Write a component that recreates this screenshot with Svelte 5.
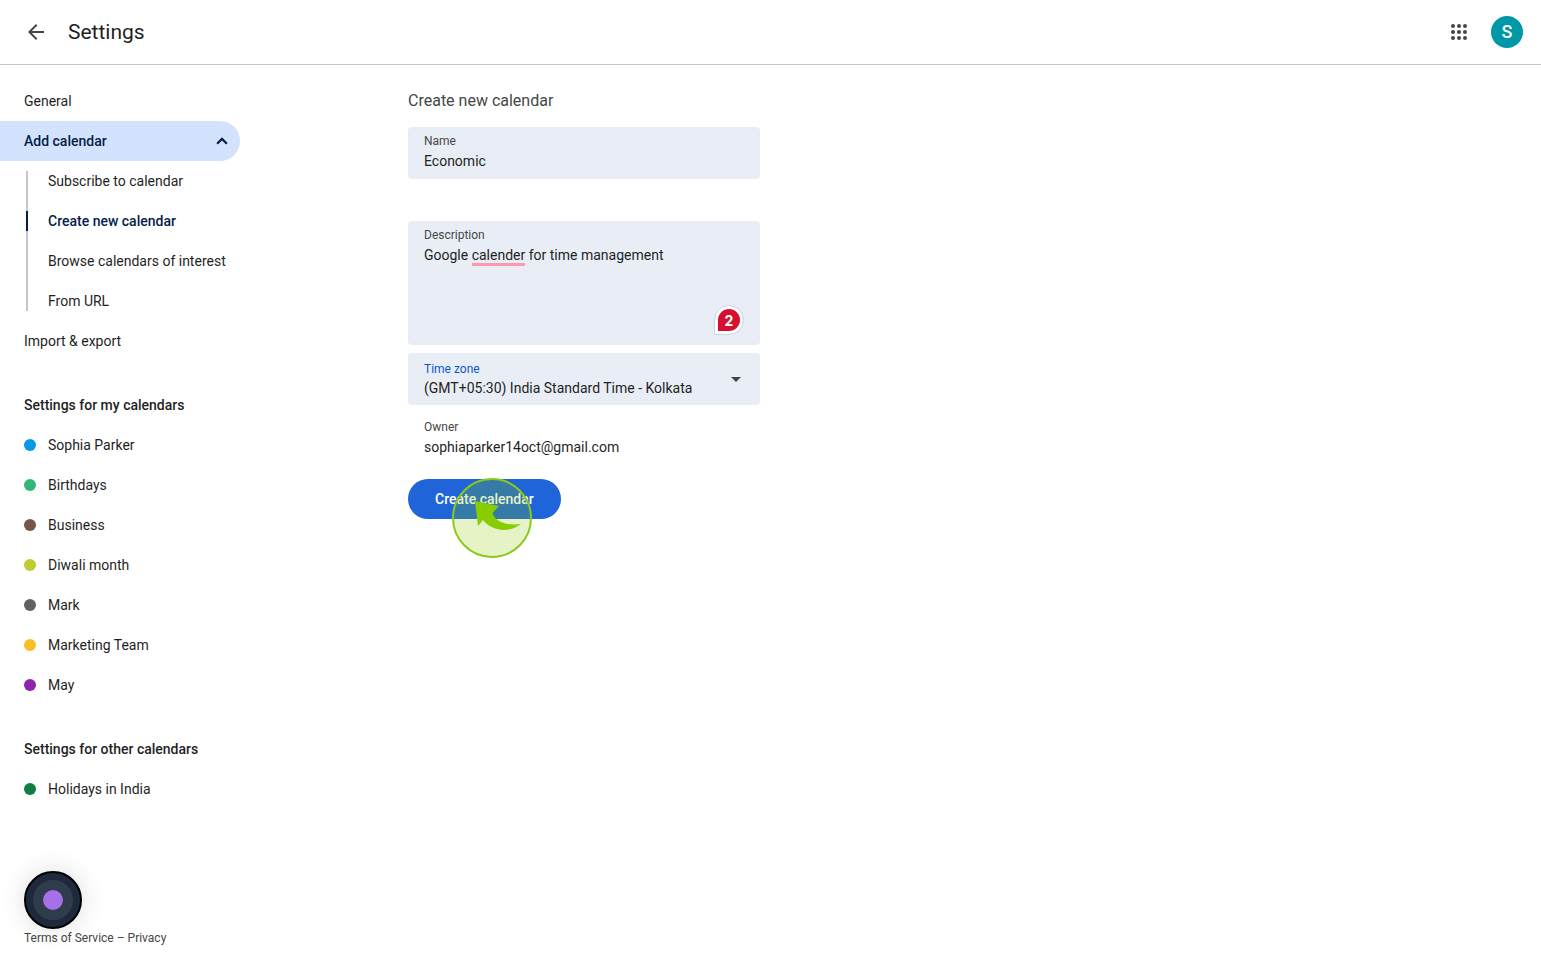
<script>
  const subItems = ['Subscribe to calendar', 'Create new calendar', 'Browse calendars of interest', 'From URL'];
  const current = 'Create new calendar';

  const myCalendars = [
    { name: 'Sophia Parker', color: '#039be5' },
    { name: 'Birthdays', color: '#33b679' },
    { name: 'Business', color: '#795548' },
    { name: 'Diwali month', color: '#c0ca33' },
    { name: 'Mark', color: '#616161' },
    { name: 'Marketing Team', color: '#f6bf26' },
    { name: 'May', color: '#8e24aa' }
  ];
  const otherCalendars = [{ name: 'Holidays in India', color: '#0b8043' }];
  const dots = [6, 12, 18];

  let name = $state('Economic');
  let description = $state('Google calender for time management');
</script>

{#snippet calendarList(items)}
  {#each items as item}
    <a class="row calendar" href="#calendar">
      <span class="dot" style:background={item.color}></span>{item.name}
    </a>
  {/each}
{/snippet}

<div class="page">
  <header>
    <button class="icon-button" aria-label="Back">
      <svg width="24" height="24" viewBox="0 0 24 24" fill="#444746">
        <path d="M20 11H7.83l5.59-5.59L12 4l-8 8 8 8 1.41-1.41L7.83 13H20v-2z" />
      </svg>
    </button>
    <h1>Settings</h1>
    <button class="icon-button apps" aria-label="Apps">
      <svg width="24" height="24" viewBox="0 0 24 24" fill="#444746">
        {#each dots as cy}
          {#each dots as cx}
            <circle {cx} {cy} r="2" />
          {/each}
        {/each}
      </svg>
    </button>
    <button class="avatar">S</button>
  </header>

  <div class="body">
    <aside>
      <nav>
        <a class="row" href="#general">General</a>
        <button class="row group">
          Add calendar
          <svg width="20" height="20" viewBox="0 0 24 24" fill="#041e49">
            <path d="M12 7.5l-6.8 6.8 1.9 1.9 4.9-4.9 4.9 4.9 1.9-1.9z" />
          </svg>
        </button>
        <div class="sub">
          {#each subItems as item}
            <a class="row" class:current={item === current} href="#add">{item}</a>
          {/each}
        </div>
        <a class="row" href="#import">Import &amp; export</a>
        <h2 class="row">Settings for my calendars</h2>
        {@render calendarList(myCalendars)}
        <h2 class="row">Settings for other calendars</h2>
        {@render calendarList(otherCalendars)}
      </nav>
      <footer><a href="#terms">Terms of Service</a> – <a href="#privacy">Privacy</a></footer>
    </aside>

    <main>
      <h2>Create new calendar</h2>
      <form>
        <div class="field name">
          <label for="name">Name</label>
          <input id="name" type="text" bind:value={name} />
        </div>
        <div class="field description">
          <label for="description">Description</label>
          <textarea id="description" spellcheck="false" bind:value={description}></textarea>
          <span class="misspelling"></span>
          <button type="button" class="badge">2</button>
        </div>
        <div class="field zone">
          <label for="zone">Time zone</label>
          <select id="zone">
            <option>(GMT+05:30) India Standard Time - Kolkata</option>
          </select>
          <svg class="caret" width="10" height="5" viewBox="0 0 10 5" fill="#444746">
            <path d="M0 0h10L5 5z" />
          </svg>
        </div>
        <div class="owner">
          <span class="caption">Owner</span>
          <span>sophiaparker14oct@gmail.com</span>
        </div>
        <div class="submit">
          <button type="button" class="create">Create calendar</button>
          <svg class="pointer" width="80" height="80" viewBox="0 0 80 80">
            <circle cx="40" cy="40" r="39" fill="#87c800" fill-opacity="0.22" stroke="#8bc919" stroke-width="2" />
            <path
              d="M23 23 L47 28 L40.500 35 C43 43 53 48 69 46 C61 52 52 53 45 51 C38 49 34 46 31 42 L26 48 Z"
              fill="#87cd00"
            />
          </svg>
        </div>
      </form>
    </main>
  </div>

  <button class="recorder" aria-label="Record"><span></span></button>
</div>

<style>
  :global(body) {
    margin: 0;
    background: #fff;
  }
  .page {
    min-height: 100vh;
    display: flex;
    flex-direction: column;
    color: #1f1f1f;
    font: 400 14px/20px 'Google Sans Text', Roboto, sans-serif;
  }
  .page :global(*) {
    box-sizing: border-box;
  }
  button,
  input,
  textarea,
  select {
    margin: 0;
    padding: 0;
    border: 0;
    background: none;
    color: inherit;
    font: inherit;
  }
  button {
    cursor: pointer;
  }
  a {
    color: inherit;
    text-decoration: none;
  }
  h1,
  h2 {
    margin: 0;
  }
  header {
    display: flex;
    align-items: center;
    padding: 12px 18px 12px 16px;
    border-bottom: 1px solid #c4c7c5;
  }
  .icon-button {
    display: grid;
    place-items: center;
    width: 40px;
    height: 40px;
  }
  h1 {
    margin-left: 12px;
    font-size: 21px;
    line-height: 28px;
    font-weight: 400;
  }
  .apps {
    margin-left: auto;
  }
  .avatar {
    width: 32px;
    height: 32px;
    margin-left: 12px;
    border-radius: 50%;
    background: #0097a7;
    color: #fff;
    font-size: 18px;
    font-weight: 500;
    text-align: center;
  }
  .body {
    flex: 1;
    display: flex;
  }
  aside {
    flex: none;
    width: 240px;
    display: flex;
    flex-direction: column;
    padding-top: 16px;
  }
  .row {
    display: flex;
    align-items: center;
    width: 100%;
    height: 40px;
    padding-left: 24px;
    white-space: nowrap;
  }
  .group {
    justify-content: space-between;
    padding-right: 8px;
    border-radius: 0 20px 20px 0;
    background: #d3e3fd;
    color: #041e49;
    font-weight: 500;
  }
  .sub {
    position: relative;
  }
  .sub::before {
    content: '';
    position: absolute;
    top: 10px;
    bottom: 10px;
    left: 26px;
    width: 2px;
    background: #c4c7c5;
  }
  .sub .row {
    position: relative;
    padding-left: 48px;
  }
  .sub .current {
    color: #041e49;
    font-weight: 500;
  }
  .current::before {
    content: '';
    position: absolute;
    top: 10px;
    left: 26px;
    width: 2px;
    height: 20px;
    background: #041e49;
  }
  nav h2 {
    margin-top: 24px;
    font-size: 14px;
    font-weight: 500;
  }
  .calendar {
    gap: 12px;
  }
  .dot {
    width: 12px;
    height: 12px;
    border-radius: 50%;
  }
  footer {
    margin-top: auto;
    padding: 16px 0 7px 24px;
    color: #444746;
    font-size: 12px;
    line-height: 16px;
  }
  main {
    flex: 1;
    padding: 24px 24px 24px 168px;
  }
  main h2 {
    margin-bottom: 14px;
    color: #444746;
    font-size: 16px;
    line-height: 24px;
    font-weight: 400;
  }
  form {
    max-width: 352px;
  }
  .field {
    position: relative;
    display: flex;
    flex-direction: column;
    padding: 6px 16px;
    border-radius: 4px;
    background: #e9eef6;
  }
  label,
  .caption {
    color: #444746;
    font-size: 12px;
    line-height: 16px;
  }
  input,
  textarea,
  select {
    width: 100%;
    height: 24px;
    line-height: 24px;
    outline: 0;
  }
  .name {
    margin-bottom: 42px;
  }
  .description {
    margin-bottom: 8px;
  }
  textarea {
    height: 96px;
    resize: none;
    overflow: hidden;
  }
  .misspelling {
    position: absolute;
    top: 42px;
    left: 64px;
    width: 53px;
    height: 3px;
    background: #ff98ab;
  }
  .badge {
    position: absolute;
    right: 17px;
    bottom: 11px;
    width: 28px;
    height: 28px;
    border: 3px solid #fff;
    border-radius: 14px 14px 14px 0;
    outline: 1px solid #cfd5e0;
    background: #d5112f;
    color: #fff;
    font-family: Inter, sans-serif;
    font-weight: 700;
    line-height: 24px;
  }
  .zone label {
    color: #0b57d0;
    margin-top: 2px;
  }
  .zone select {
    appearance: none;
    height: 22px;
    line-height: 22px;
  }
  .caret {
    position: absolute;
    right: 19px;
    top: 24px;
    pointer-events: none;
  }
  .owner {
    display: flex;
    flex-direction: column;
    gap: 2px;
    padding: 14px 16px 22px;
  }
  .submit {
    position: relative;
  }
  .create {
    height: 40px;
    padding: 0 27px;
    border-radius: 20px;
    background: #1f64d8;
    color: #fff;
    font-weight: 500;
  }
  .pointer {
    position: absolute;
    top: -1px;
    left: 44px;
    pointer-events: none;
  }
  .recorder {
    position: fixed;
    left: 24px;
    bottom: 24px;
    display: grid;
    place-items: center;
    width: 58px;
    height: 58px;
    border: 2px solid #000;
    border-radius: 50%;
    background: #1e293b;
    box-shadow: 0 0 24px rgba(30, 41, 59, 0.16);
  }
  .recorder span {
    width: 40px;
    height: 40px;
    border: 10px solid #303b4b;
    border-radius: 50%;
    background: #a570e8;
  }
</style>
